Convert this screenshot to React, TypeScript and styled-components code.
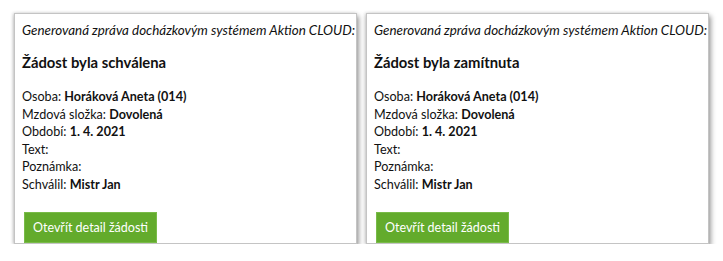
import React from "react";
import styled, { createGlobalStyle } from "styled-components";

const Global = createGlobalStyle`
  html, body { margin: 0; padding: 0; background: #ffffff; }
  body { font-family: Lato, "Open Sans", sans-serif; color: #111; }
`;

const Page = styled.div`
  display: flex;
  gap: 9px;
  padding: 13px 0 0 14px;
`;

const Card = styled.div`
  box-sizing: border-box;
  width: 343px;
  height: 231px;
  background: #fff;
  border: 1px solid #c4c4c4;
  box-shadow: 2px 3px 5px rgba(0, 0, 0, 0.38), -1px 0 3px rgba(0, 0, 0, 0.18);
  padding: 7px 0 0 7px;
  display: flex;
  flex-direction: column;
`;

const Note = styled.div`
  font-style: italic;
  font-size: 13.4px;
  line-height: 18px;
  white-space: nowrap;
`;

const Title = styled.h2`
  margin: 11px 0 0;
  font-size: 14.8px;
  line-height: 24px;
  font-weight: 700;
`;

const Fields = styled.div`
  margin-top: 14px;
  font-size: 12.6px;
  line-height: 17.5px;
`;

const Line = styled.div``;

const Button = styled.a`
  align-self: flex-start;
  margin: 19px 0 0 2px;
  box-sizing: border-box;
  height: 31px;
  padding: 0 8px;
  display: flex;
  align-items: center;
  white-space: nowrap;
  background: #63ab2c;
  border: 1px solid #79bb48;
  color: #fff;
  font-size: 12.5px;
  text-decoration: none;
`;

type Props = { title: string };

const Message: React.FC<Props> = ({ title }) => (
  <Card>
    <Note>Generovaná zpráva docházkovým systémem Aktion CLOUD:</Note>
    <Title>{title}</Title>
    <Fields>
      <Line>Osoba: <b>Horáková Aneta (014)</b></Line>
      <Line>Mzdová složka: <b>Dovolená</b></Line>
      <Line>Období: <b>1. 4. 2021</b></Line>
      <Line>Text:</Line>
      <Line>Poznámka:</Line>
      <Line>Schválil: <b>Mistr Jan</b></Line>
    </Fields>
    <Button href="#">Otevřít detail žádosti</Button>
  </Card>
);

export default function App() {
  return (
    <>
      <Global />
      <Page>
        <Message title="Žádost byla schválena" />
        <Message title="Žádost byla zamítnuta" />
      </Page>
    </>
  );
}
